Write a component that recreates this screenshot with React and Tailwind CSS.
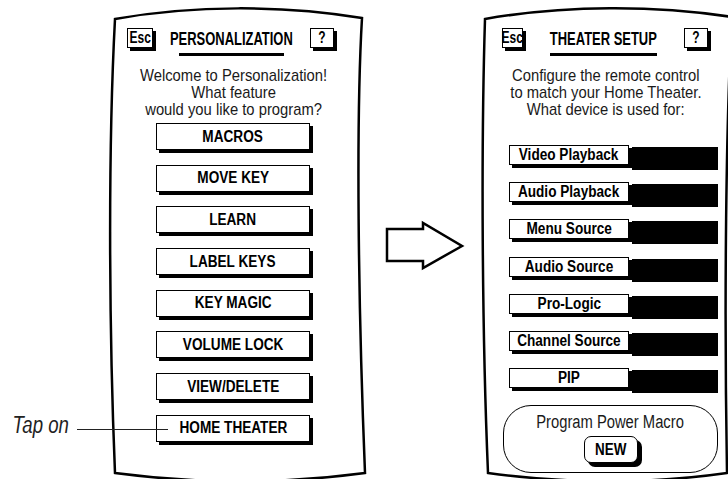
const sans = "font-['Liberation_Sans','Arial',sans-serif]";

const features = [
  'MACROS',
  'MOVE KEY',
  'LEARN',
  'LABEL KEYS',
  'KEY MAGIC',
  'VOLUME LOCK',
  'VIEW/DELETE',
  'HOME THEATER',
];

const devices = [
  'Video Playback',
  'Audio Playback',
  'Menu Source',
  'Audio Source',
  'Pro-Logic',
  'Channel Source',
  'PIP',
];

function Outline({ d }) {
  return (
    <svg className="absolute inset-0 w-full h-full overflow-visible pointer-events-none" fill="none">
      <path d={d} stroke="#000" strokeWidth="2.5" strokeLinejoin="miter" />
    </svg>
  );
}

function KeyBox({ children, className = '' }) {
  return (
    <div
      className={`flex items-center justify-center h-[20px] border-[1.5px] border-black bg-white shadow-[3px_3px_0_#000] ${className}`}
    >
      <span className="shrink-0 whitespace-nowrap text-[16px] font-bold leading-none scale-x-[0.75]">{children}</span>
    </div>
  );
}

function Header({ title, escW, lineW, width }) {
  return (
    <div className={`flex items-start ${width}`}>
      <KeyBox className={`shrink-0 ${escW}`}>Esc</KeyBox>
      <div className="flex-1 min-w-0 flex flex-col items-center">
        <div className="shrink-0 mt-[2px] whitespace-nowrap text-[18px] font-bold leading-none scale-x-[0.72]">{title}</div>
        <div className={`mt-[5px] h-[3px] bg-black ${lineW}`} />
      </div>
      <KeyBox className="shrink-0 w-[24px]">?</KeyBox>
    </div>
  );
}

function Lines({ lines, width }) {
  return (
    <div className={`mt-[11px] flex flex-col items-center text-[17px] leading-[17px] text-[#1a1a1a] ${width}`}>
      {lines.map((l) => (
        <div key={l} className="shrink-0 whitespace-nowrap scale-x-[0.87]">
          {l}
        </div>
      ))}
    </div>
  );
}

export default function App() {
  return (
    <div className={`relative w-[728px] h-[479px] overflow-hidden bg-white text-black flex ${sans}`}>
      {/* annotation */}
      <div className="w-[108px] shrink-0 pt-[414px] pl-[12px] flex items-start">
        <span className="w-[58px] shrink-0 flex justify-center">
          <span className="shrink-0 whitespace-nowrap text-[23px] italic leading-none text-[#222] scale-x-[0.81]">Tap on</span>
        </span>
        <div className="relative z-10 shrink-0 ml-[7px] mt-[15px] w-[91px] h-[1.3px] bg-[#222]" />
      </div>

      {/* Personalization screen */}
      <div className="relative w-[262px] h-full shrink-0">
        <Outline d="M7 19 C 85 5, 175 5, 254 18 C 248 120, 250 300, 257 473 C 175 484, 90 484, 7 473 C 1 330, 0 150, 7 19 Z" />
        <div className="relative pt-[28px] pl-[19px] flex flex-col">
          <Header title="PERSONALIZATION" escW="w-[26px]" lineW="w-[105px]" width="w-[207px]" />
          <Lines
            width="w-[214px]"
            lines={['Welcome to Personalization!', 'What feature', 'would you like to program?']}
          />
          <div className="mt-[5px] pl-[29px] flex flex-col gap-[14.7px]">
            {features.map((f) => (
              <div
                key={f}
                className="w-[154px] h-[27px] flex items-center justify-center border-[1.5px] border-black bg-white shadow-[3px_3px_0_#000]"
              >
                <span className="shrink-0 whitespace-nowrap text-[16px] font-bold leading-none scale-x-[0.85]">{f}</span>
              </div>
            ))}
          </div>
        </div>
      </div>

      {/* arrow */}
      <div className="w-[110px] shrink-0 pt-[220px] pl-[15px]">
        <svg width="80" height="52" viewBox="0 0 80 52" fill="none">
          <path d="M2 9 H38 V3 L77 26 L38 48 V41 H2 Z" stroke="#000" strokeWidth="2.5" strokeLinejoin="miter" />
        </svg>
      </div>

      {/* Theater setup screen */}
      <div className="relative flex-1 h-full">
        <Outline d="M5 19 C 85 5, 175 5, 252 17 C 246 120, 244 300, 247 473 C 170 484, 90 484, 8 473 C 2 330, 1 150, 5 19 Z" />
        <div className="relative pt-[28px] pl-[22px] flex flex-col">
          <Header title="THEATER SETUP" escW="w-[21px]" lineW="w-[107px]" width="w-[206px]" />
          <Lines
            width="w-[208px]"
            lines={['Configure the remote control', 'to match your Home Theater.', 'What device is used for:']}
          />
          <div className="mt-[27px] pl-[7px] flex flex-col gap-[12.2px]">
            {devices.map((d) => (
              <div key={d} className="flex items-start">
                <div className="w-[120px] h-[20px] flex items-center justify-center border-[1.5px] border-black bg-white shadow-[3px_3px_0_#000]">
                  <span className="shrink-0 whitespace-nowrap text-[16px] font-bold leading-none scale-x-[0.85]">{d}</span>
                </div>
                <div className="ml-[3px] mt-[2px] w-[86px] h-[23px] bg-black" />
              </div>
            ))}
          </div>
          <div className="mt-[12px] ml-[1px] w-[215px] h-[68px] rounded-[28px] border-[1.5px] border-black flex flex-col items-center pt-[7px]">
            <div className="shrink-0 whitespace-nowrap text-[18px] leading-[18px] text-[#1a1a1a] scale-x-[0.82]">
              Program Power Macro
            </div>
            <div className="mt-[5px] w-[54px] h-[27px] rounded-[7px] border-[1.5px] border-black bg-white shadow-[4px_4px_0_#000] flex items-center justify-center">
              <span className="shrink-0 text-[16px] font-bold leading-none scale-x-[0.84]">NEW</span>
            </div>
          </div>
        </div>
      </div>
    </div>
  );
}
